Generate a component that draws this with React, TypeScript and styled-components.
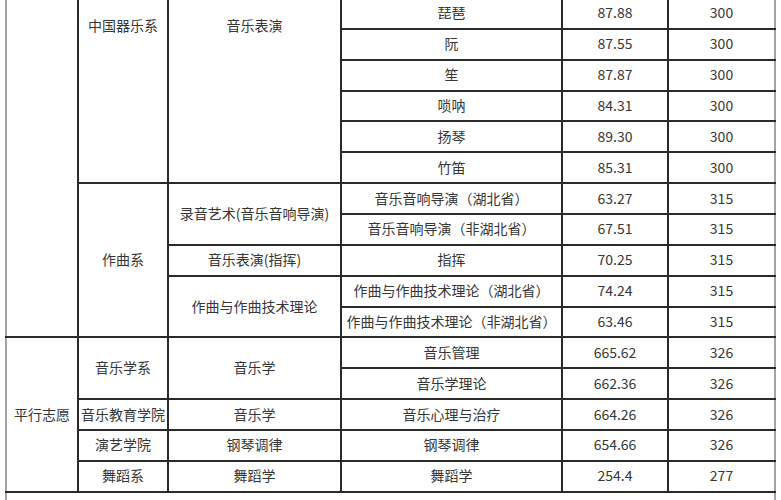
import { FC } from "react";
import styled, { createGlobalStyle } from "styled-components";

const GlobalStyle = createGlobalStyle`
  html, body {
    margin: 0;
    padding: 0;
    background: #ffffff;
    overflow: hidden;
  }
  body {
    font-family: "Noto Sans CJK SC", "Noto Sans", sans-serif;
    color: #363636;
  }
`;

interface Row {
  direction: string;
  score: string;
  rank: string;
}

const instrumentRows: Row[] = [
  { direction: "琵琶", score: "87.88", rank: "300" },
  { direction: "阮", score: "87.55", rank: "300" },
  { direction: "笙", score: "87.87", rank: "300" },
  { direction: "唢呐", score: "84.31", rank: "300" },
  { direction: "扬琴", score: "89.30", rank: "300" },
  { direction: "竹笛", score: "85.31", rank: "300" },
];

const Page = styled.div`
  width: 781px;
  height: 500px;
  overflow: hidden;
`;

const Table = styled.table`
  border-collapse: collapse;
  table-layout: fixed;
  width: 769px;
  margin: -2px 0 0 5px;
  font-size: 14px;
  line-height: 20px;

  tr:first-child td {
    border-top: none;
  }
`;

const Tr = styled.tr`
  height: 30.87px;
`;

const NoteRow = styled.tr`
  height: 40px;
`;

const Cell = styled.td<{ $top?: boolean; $edge?: "left" | "right" }>`
  border: 2px solid #2a2a2a;
  padding: ${(p) => (p.$top ? "17px 2px 0" : "0 2px 2px")};
  text-align: center;
  vertical-align: ${(p) => (p.$top ? "top" : "middle")};
  white-space: nowrap;
  overflow: hidden;
  ${(p) => p.$edge === "left" && "border-left-color: #a3a3a3;"}
  ${(p) => p.$edge === "right" && "border-right-color: #a3a3a3;"}
`;

const NoteCell = styled.td`
  border-left: 2px solid #a3a3a3;
  border-right: 2px solid #a3a3a3;
  border-top: 2px solid #2a2a2a;
  border-bottom: none;
`;

const App: FC = () => {
  return (
    <Page>
      <GlobalStyle />
      <Table>
        <colgroup>
          <col style={{ width: 72 }} />
          <col style={{ width: 90 }} />
          <col style={{ width: 173 }} />
          <col style={{ width: 221 }} />
          <col style={{ width: 106 }} />
          <col style={{ width: 107 }} />
        </colgroup>
        <tbody>
          {instrumentRows.map((r, i) => (
            <Tr key={r.direction}>
              {i === 0 && (
                <>
                  <Cell rowSpan={11} $edge="left" />
                  <Cell rowSpan={6} $top>
                    中国器乐系
                  </Cell>
                  <Cell rowSpan={6} $top>
                    音乐表演
                  </Cell>
                </>
              )}
              <Cell>{r.direction}</Cell>
              <Cell>{r.score}</Cell>
              <Cell $edge="right">{r.rank}</Cell>
            </Tr>
          ))}

          <Tr>
            <Cell rowSpan={5}>作曲系</Cell>
            <Cell rowSpan={2}>录音艺术(音乐音响导演)</Cell>
            <Cell>音乐音响导演（湖北省）</Cell>
            <Cell>63.27</Cell>
            <Cell $edge="right">315</Cell>
          </Tr>
          <Tr>
            <Cell>音乐音响导演（非湖北省）</Cell>
            <Cell>67.51</Cell>
            <Cell $edge="right">315</Cell>
          </Tr>
          <Tr>
            <Cell>音乐表演(指挥)</Cell>
            <Cell>指挥</Cell>
            <Cell>70.25</Cell>
            <Cell $edge="right">315</Cell>
          </Tr>
          <Tr>
            <Cell rowSpan={2}>作曲与作曲技术理论</Cell>
            <Cell>作曲与作曲技术理论（湖北省）</Cell>
            <Cell>74.24</Cell>
            <Cell $edge="right">315</Cell>
          </Tr>
          <Tr>
            <Cell>作曲与作曲技术理论（非湖北省）</Cell>
            <Cell>63.46</Cell>
            <Cell $edge="right">315</Cell>
          </Tr>

          <Tr>
            <Cell rowSpan={5} $edge="left">
              平行志愿
            </Cell>
            <Cell rowSpan={2}>音乐学系</Cell>
            <Cell rowSpan={2}>音乐学</Cell>
            <Cell>音乐管理</Cell>
            <Cell>665.62</Cell>
            <Cell $edge="right">326</Cell>
          </Tr>
          <Tr>
            <Cell>音乐学理论</Cell>
            <Cell>662.36</Cell>
            <Cell $edge="right">326</Cell>
          </Tr>
          <Tr>
            <Cell>音乐教育学院</Cell>
            <Cell>音乐学</Cell>
            <Cell>音乐心理与治疗</Cell>
            <Cell>664.26</Cell>
            <Cell $edge="right">326</Cell>
          </Tr>
          <Tr>
            <Cell>演艺学院</Cell>
            <Cell>钢琴调律</Cell>
            <Cell>钢琴调律</Cell>
            <Cell>654.66</Cell>
            <Cell $edge="right">326</Cell>
          </Tr>
          <Tr>
            <Cell>舞蹈系</Cell>
            <Cell>舞蹈学</Cell>
            <Cell>舞蹈学</Cell>
            <Cell>254.4</Cell>
            <Cell $edge="right">277</Cell>
          </Tr>
          <NoteRow>
            <NoteCell colSpan={6} />
          </NoteRow>
        </tbody>
      </Table>
    </Page>
  );
};

export default App;
